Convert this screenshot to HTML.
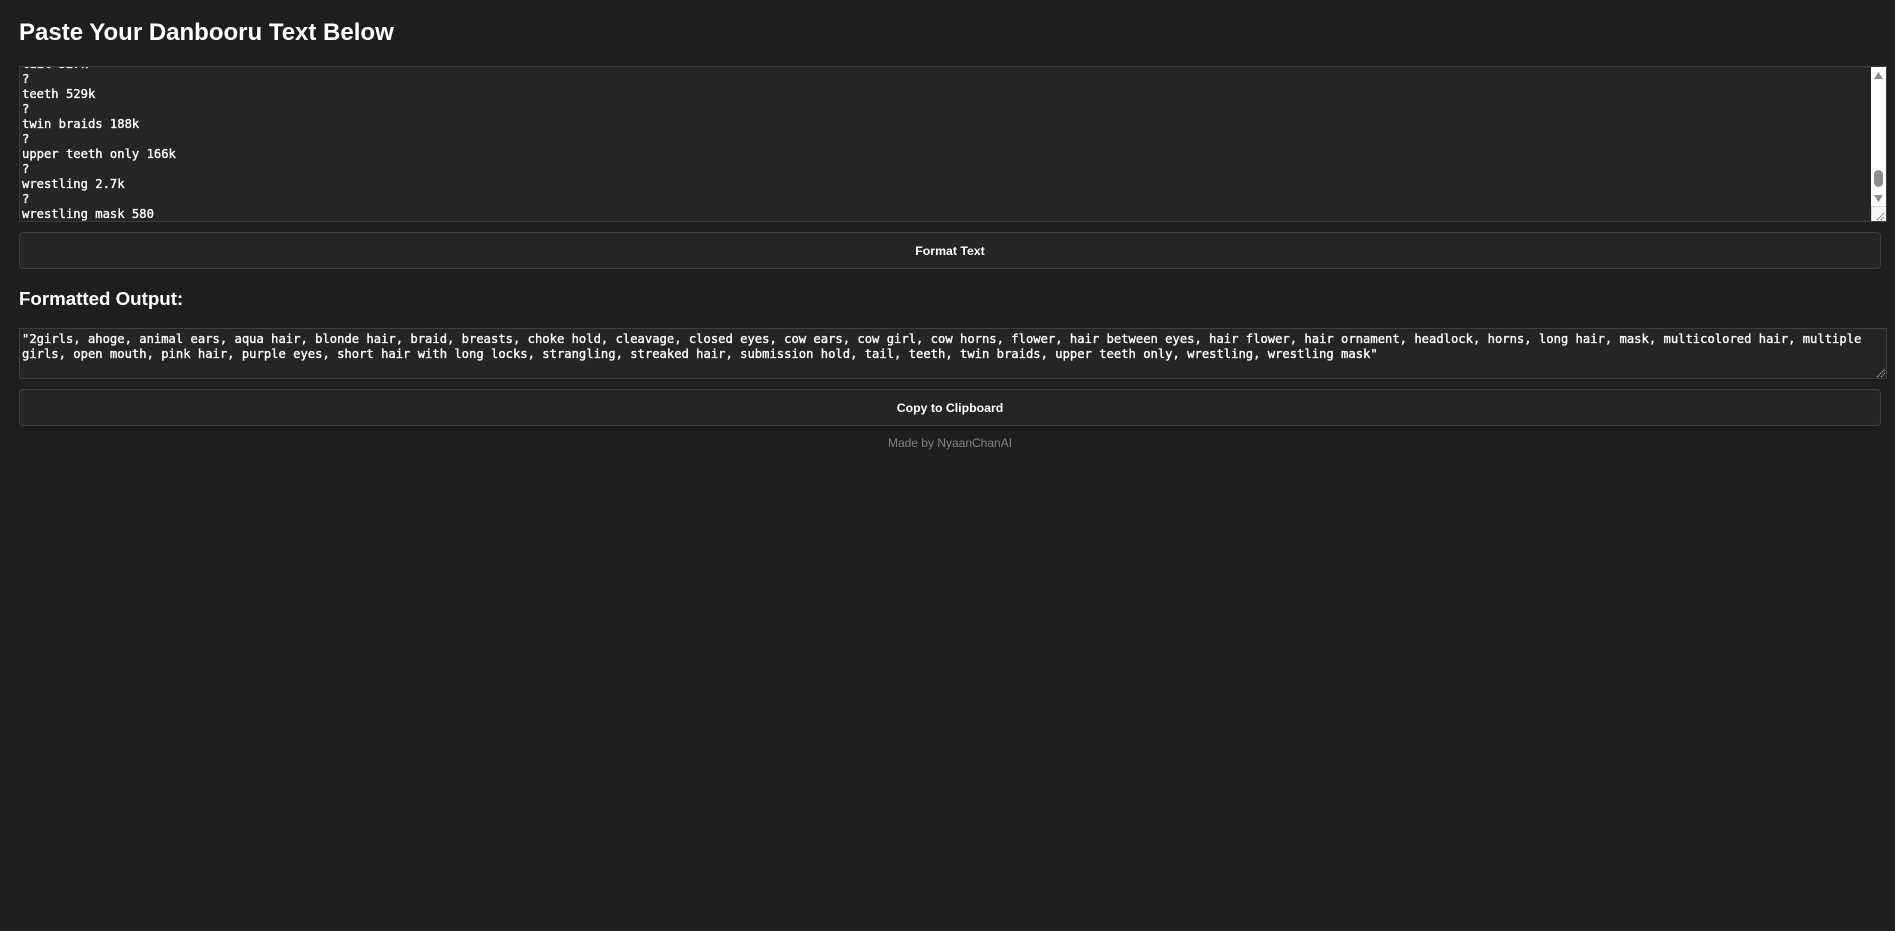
<!DOCTYPE html>
<html lang="en">
<head>
<meta charset="utf-8">
<title>Danbooru Text Formatter</title>
<style>
html,body{margin:0;padding:0;width:1895px;height:931px;overflow:hidden;background:#1e1e1e;color:#fff;font-family:"Liberation Sans",Arial,sans-serif}
.abs{position:absolute;box-sizing:border-box}
h1,h2{margin:0;font-weight:700;white-space:nowrap;position:absolute}
h1{left:19px;top:19px;font-size:24px;line-height:28px}
h2{left:19px;top:288px;font-size:18.72px;line-height:22px}
.box{background:#252525;border:1px solid #3c3c3c;overflow:hidden}
.mono{font-family:"DejaVu Sans Mono","Liberation Mono",monospace;font-size:12.18px;line-height:15px;white-space:pre;color:#fff;position:absolute;left:2px;-webkit-text-stroke:0.35px #fff}
.btn{background:#252525;border:1px solid #3c3c3c;border-radius:4px;left:19px;width:1862px;height:37px;text-align:center;font-size:12.3px;font-weight:700;line-height:36px;color:#fff}
.foot{left:0;width:1900px;top:436px;text-align:center;font-size:12px;line-height:14px;color:#808080}
</style>
</head>
<body>
<h1>Paste Your Danbooru Text Below</h1>

<div class="abs box" style="left:19px;top:66px;width:1868px;height:156px">
<div class="mono" style="top:-10px">tail 527k
?
teeth 529k
?
twin braids 188k
?
upper teeth only 166k
?
wrestling 2.7k
?
wrestling mask 580</div>
<div class="abs" style="left:1851px;top:0;width:15px;height:154px;background:#fff">
<svg width="15" height="154" style="position:absolute;left:0;top:0">
<path d="M3 12L7.500 5 12 12Z" fill="#8c8c8c"/>
<rect x="3" y="103" width="9" height="17" rx="4.500" fill="#8c8c8c"/>
<path d="M3 128L12 128 7.500 135Z" fill="#8c8c8c"/>
<rect x="0.500" y="139.500" width="15" height="15" fill="#f8f8f8" stroke="#d8d8d8"/>
<path d="M6 153L13 146M10 153L13 150" stroke="#555" stroke-width="1" stroke-dasharray="1.500 0.700" fill="none"/>
</svg>
</div>
</div>

<div class="abs btn" style="top:232px">Format Text</div>

<h2>Formatted Output:</h2>

<div class="abs box" style="left:19px;top:328px;width:1868px;height:51px">
<div class="mono" style="top:3px">"2girls, ahoge, animal ears, aqua hair, blonde hair, braid, breasts, choke hold, cleavage, closed eyes, cow ears, cow girl, cow horns, flower, hair between eyes, hair flower, hair ornament, headlock, horns, long hair, mask, multicolored hair, multiple
girls, open mouth, pink hair, purple eyes, short hair with long locks, strangling, streaked hair, submission hold, tail, teeth, twin braids, upper teeth only, wrestling, wrestling mask"</div>
<svg width="12" height="12" style="position:absolute;right:0;bottom:0">
<path d="M3 11L11 3M7 11L11 7" stroke="#b0b0b0" stroke-width="1" stroke-dasharray="1.500 0.700" fill="none"/>
</svg>
</div>

<div class="abs btn" style="top:389px">Copy to Clipboard</div>

<div class="abs foot">Made by NyaanChanAI</div>
</body>
</html>
